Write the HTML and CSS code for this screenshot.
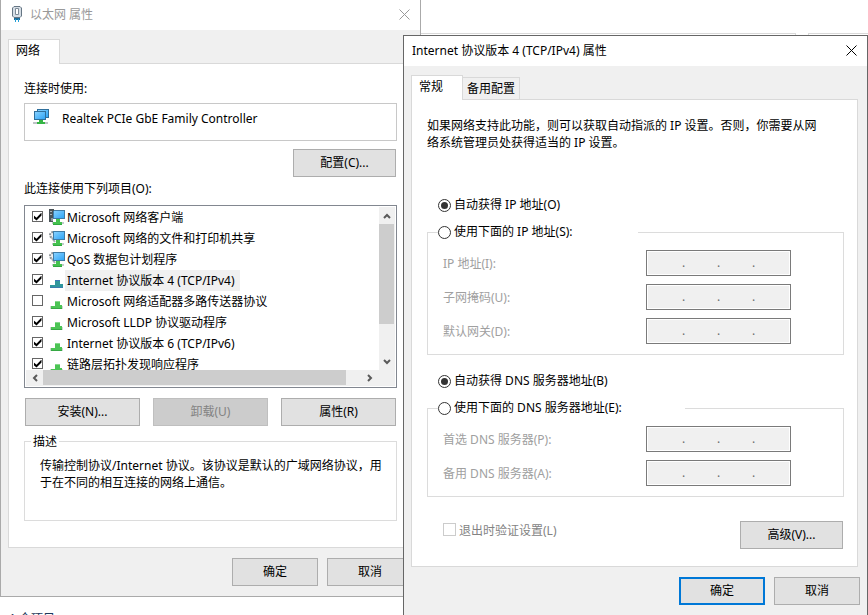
FILE: index.html
```
<!DOCTYPE html>
<html lang="zh-CN">
<head>
<meta charset="utf-8">
<title>以太网 属性</title>
<link rel="stylesheet" href="styles.css">
</head>
<body>
<svg class="defs" aria-hidden="true">
  <defs>
    <linearGradient id="screen" x1="0" y1="0" x2="1" y2="1">
      <stop offset="0" stop-color="#8bd3ff"/>
      <stop offset="1" stop-color="#2ba3f7"/>
    </linearGradient>
    <symbol id="monitor" viewBox="0 0 16 16">
      <path d="M3 13h12v2H3z" fill="#c3cacc"/>
      <path d="M7 10h4v3h2v3H4v-3h3z" fill="#45c14f"/>
      <path d="M4 15h9v1H4z" fill="#2fa83f"/>
      <rect x="4.500" y="1.500" width="11" height="8" fill="url(#screen)" stroke="#3f7ba5"/>
    </symbol>
    <symbol id="client" viewBox="0 0 16 16">
      <use href="#monitor"/>
      <path d="M0 0h5v2H4v11H0z" fill="#4a5358"/>
      <path d="M1 2.500h2M1 5.500h2" stroke="#aab3b8"/>
      <path d="M2 9h2v3H2z" fill="#8e989d"/>
    </symbol>
    <symbol id="service" viewBox="0 0 16 16">
      <circle cx="4" cy="5" r="3" fill="#eef0f1" stroke="#8d959a" stroke-width="2" stroke-dasharray="2 1"/>
      <path d="M3 8l3 4" stroke="#a8aeb2" stroke-width="2"/>
      <use href="#monitor"/>
    </symbol>
    <symbol id="protocol" viewBox="0 0 16 16">
      <path d="M1 13h13v3H1z" fill="#cfd8d2"/>
      <path d="M6 8h5v4h2v4H2v-3h4z" fill="#4cc455"/>
      <path d="M6 8h5v1H6z" fill="#86d98c"/>
      <path d="M2 15h11v1H2z" fill="#35a843"/>
    </symbol>
    <symbol id="protocol-selected" viewBox="0 0 16 16">
      <path d="M6 8h5v4h3v4H1v-3h5z" fill="#2f969c"/>
      <path d="M6 8h5v1H6z" fill="#3d77b8"/>
      <path d="M1 15h13v1H1z" fill="#3a7cae"/>
    </symbol>
    <symbol id="close" viewBox="0 0 11 11">
      <path d="M0.500 0.500l10 10M10.500 0.500l-10 10" fill="none" stroke="currentColor"/>
    </symbol>
    <symbol id="arrow" viewBox="0 0 8 6">
      <path d="M1 5l3-3 3 3" fill="none" stroke="#5a5a5a" stroke-width="2"/>
    </symbol>
  </defs>
</svg>

<main class="desktop">
  <div class="toolbar-edge"><span class="address"></span><span class="search"></span></div>
  <footer class="status"><span>1 个项目</span></footer>

  <section class="window adapter" aria-label="以太网 属性">
    <header class="titlebar">
      <svg class="app-icon" viewBox="0 0 10 17">
        <path d="M2 .5h6L9.500 2v8L8 11.500H2L.500 10V2z" fill="#d5dde5" stroke="#667684"/>
        <path d="M3.500 2.500h3v6h-3z" fill="#fff" stroke="#7d8a96"/>
        <path d="M2 12h6v2H2z" fill="#1d6b98"/>
        <path d="M3.500 13v3M6.500 13v3" stroke="#24a0d8"/>
      </svg>
      <h1>以太网 属性</h1>
      <button class="close" aria-label="关闭"><svg><use href="#close"/></svg></button>
    </header>
    <div class="body">
      <nav class="tabs"><button class="tab active">网络</button></nav>
      <div class="panel">
        <p>连接时使用:</p>
        <div class="device">
          <svg class="device-icon" viewBox="0 0 16 16">
            <path d="M0 13h15v2H0z" fill="#bfc4c7"/>
            <path d="M6 11h4v2h2v2H4v-2h2z" fill="#35b545"/>
            <rect x="4.500" y=".5" width="11" height="8" fill="url(#screen)" stroke="#2f6f9c"/>
            <rect x="1.500" y="2.500" width="11" height="8" fill="url(#screen)" stroke="#2f6f9c"/>
          </svg>
          <span>Realtek PCIe GbE Family Controller</span>
        </div>
        <div class="actions end"><button class="btn">配置(C)...</button></div>
        <p class="items-label">此连接使用下列项目(O):</p>
        <div class="list">
          <ul>
            <li><input type="checkbox" id="i1" checked><svg><use href="#client"/></svg><label for="i1">Microsoft 网络客户端</label></li>
            <li><input type="checkbox" id="i2" checked><svg><use href="#service"/></svg><label for="i2">Microsoft 网络的文件和打印机共享</label></li>
            <li><input type="checkbox" id="i3" checked><svg><use href="#service"/></svg><label for="i3">QoS 数据包计划程序</label></li>
            <li class="selected"><input type="checkbox" id="i4" checked><svg><use href="#protocol-selected"/></svg><label for="i4">Internet 协议版本 4 (TCP/IPv4)</label></li>
            <li><input type="checkbox" id="i5"><svg><use href="#protocol"/></svg><label for="i5">Microsoft 网络适配器多路传送器协议</label></li>
            <li><input type="checkbox" id="i6" checked><svg><use href="#protocol"/></svg><label for="i6">Microsoft LLDP 协议驱动程序</label></li>
            <li><input type="checkbox" id="i7" checked><svg><use href="#protocol"/></svg><label for="i7">Internet 协议版本 6 (TCP/IPv6)</label></li>
            <li><input type="checkbox" id="i8" checked><svg><use href="#protocol"/></svg><label for="i8">链路层拓扑发现响应程序</label></li>
          </ul>
          <div class="scroll vertical">
            <button aria-label="向上"><svg><use href="#arrow"/></svg></button>
            <span class="thumb"></span>
            <button class="down" aria-label="向下"><svg><use href="#arrow"/></svg></button>
          </div>
          <div class="scroll horizontal">
            <button class="left" aria-label="向左"><svg><use href="#arrow"/></svg></button>
            <span class="thumb"></span>
            <button class="right" aria-label="向右"><svg><use href="#arrow"/></svg></button>
          </div>
        </div>
        <div class="actions three">
          <button class="btn">安装(N)...</button>
          <button class="btn" disabled>卸载(U)</button>
          <button class="btn">属性(R)</button>
        </div>
        <fieldset class="description">
          <legend>描述</legend>
          <p>传输控制协议/Internet 协议。该协议是默认的广域网络协议，用于在不同的相互连接的网络上通信。</p>
        </fieldset>
      </div>
      <div class="dialog-actions"><button class="btn">确定</button><button class="btn">取消</button></div>
    </div>
  </section>

  <section class="window ipv4" aria-label="Internet 协议版本 4 (TCP/IPv4) 属性">
    <header class="titlebar">
      <h1>Internet 协议版本 4 (TCP/IPv4) 属性</h1>
      <button class="close" aria-label="关闭"><svg><use href="#close"/></svg></button>
    </header>
    <div class="body">
      <nav class="tabs"><button class="tab active">常规</button><button class="tab">备用配置</button></nav>
      <div class="panel">
        <p class="intro">如果网络支持此功能，则可以获取自动指派的 IP 设置。否则，你需要从网络系统管理员处获得适当的 IP 设置。</p>
        <div class="option"><input type="radio" name="ip" id="ip-auto" checked><label for="ip-auto">自动获得 IP 地址(O)</label></div>
        <fieldset class="group">
          <legend class="option"><input type="radio" name="ip" id="ip-manual"><label for="ip-manual">使用下面的 IP 地址(S):</label></legend>
          <div class="field"><label for="a1">IP 地址(I):</label><div class="ip"><input id="a1" disabled><span>.</span><input aria-label="2" disabled><span>.</span><input aria-label="3" disabled><span>.</span><input aria-label="4" disabled></div></div>
          <div class="field"><label for="b1">子网掩码(U):</label><div class="ip"><input id="b1" disabled><span>.</span><input aria-label="2" disabled><span>.</span><input aria-label="3" disabled><span>.</span><input aria-label="4" disabled></div></div>
          <div class="field"><label for="c1">默认网关(D):</label><div class="ip"><input id="c1" disabled><span>.</span><input aria-label="2" disabled><span>.</span><input aria-label="3" disabled><span>.</span><input aria-label="4" disabled></div></div>
        </fieldset>
        <div class="option dns-auto"><input type="radio" name="dns" id="dns-auto" checked><label for="dns-auto">自动获得 DNS 服务器地址(B)</label></div>
        <fieldset class="group dns">
          <legend class="option"><input type="radio" name="dns" id="dns-manual"><label for="dns-manual">使用下面的 DNS 服务器地址(E):</label></legend>
          <div class="field"><label for="d1">首选 DNS 服务器(P):</label><div class="ip"><input id="d1" disabled><span>.</span><input aria-label="2" disabled><span>.</span><input aria-label="3" disabled><span>.</span><input aria-label="4" disabled></div></div>
          <div class="field"><label for="e1">备用 DNS 服务器(A):</label><div class="ip"><input id="e1" disabled><span>.</span><input aria-label="2" disabled><span>.</span><input aria-label="3" disabled><span>.</span><input aria-label="4" disabled></div></div>
        </fieldset>
        <div class="advanced">
          <input type="checkbox" id="validate" disabled><label for="validate">退出时验证设置(L)</label>
          <button class="btn">高级(V)...</button>
        </div>
      </div>
      <div class="dialog-actions"><button class="btn primary">确定</button><button class="btn">取消</button></div>
    </div>
  </section>
</main>
</body>
</html>
```
FILE: styles.css
```
* { box-sizing: border-box; }
body, h1, p, ul, fieldset, legend { margin: 0; padding: 0; }
body, button, input {
  font: 12px/17px "Noto Sans", "Noto Sans CJK SC", sans-serif;
  color: #000;
}
body { background: #fff; }
button, input { margin: 0; padding: 0; }
svg { display: block; flex: none; }
.defs { position: absolute; width: 0; height: 0; }

.desktop { position: relative; height: 100vh; overflow: hidden; }
.toolbar-edge {
  display: flex;
  gap: 12px;
  padding: 33px 0 0 421px;
}
.toolbar-edge span { height: 4px; border-top: 1px solid #d9d9d9; }
.address { flex: 1; border-right: 1px solid #d9d9d9; }
.search { width: 60px; border-left: 1px solid #d9d9d9; }
.status {
  position: absolute;
  left: 9px;
  top: 610px;
  color: #1e395b;
}

.window { position: absolute; background: #f0f0f0; }
.adapter {
  left: 0;
  top: 0;
  width: calc(50% - 13px);
  border: 1px solid #aaa;
  border-top: 0;
}
.ipv4 {
  left: calc(50% - 31px);
  right: 0;
  top: 35px;
  bottom: 0;
  border: 1px solid #666;
  border-bottom: 0;
}

.titlebar {
  display: flex;
  align-items: center;
  height: 30px;
  padding: 0 10px 2px 8px;
  background: #fff;
}
.titlebar h1 { flex: 1; font-size: 12px; font-weight: 400; }
.adapter .titlebar { padding-left: 11px; color: #999; }
.app-icon { width: 10px; height: 17px; margin-right: 8px; }
.close { border: 0; background: none; color: #000; }
.close svg { width: 11px; height: 11px; }
.adapter .close { color: #999; }

.body { padding: 9px 7px 10px; }
.tabs { display: flex; align-items: flex-end; }
.tab {
  height: 22px;
  padding: 0 4px;
  border: 1px solid #d9d9d9;
  border-width: 1px 1px 0 0;
  background: #f0f0f0;
}
.tab.active {
  position: relative;
  width: 52px;
  height: 25px;
  margin-bottom: -1px;
  padding: 0 12px 3px 0;
  border-left-width: 1px;
  background: #fff;
}
.panel {
  padding: 16px 15px 26px;
  border: 1px solid #d9d9d9;
  background: #fff;
}

.btn {
  width: 103px;
  height: 28px;
  padding-bottom: 1px;
  border: 1px solid #adadad;
  background: #e1e1e1;
}
.btn:disabled { border-color: #bfbfbf; background: #ccc; color: #838383; }
.btn.primary { border: 2px solid #0078d7; }
.actions { display: flex; padding: 0 1px; }
.actions.end { justify-content: flex-end; margin-top: 8px; }
.actions.three { gap: 13px; margin-top: 10px; }
.three .btn { flex: 1; }
.dialog-actions {
  display: flex;
  justify-content: flex-end;
  gap: 9px;
  padding-top: 10px;
}
.dialog-actions .btn { width: 86px; }

.device {
  display: flex;
  gap: 13px;
  height: 38px;
  margin-top: 6px;
  padding: 5px 8px;
  border: 1px solid #c8c8c8;
}
.device-icon { width: 16px; height: 16px; }
.device span { padding-top: 1px; }
.items-label { margin-top: 3px; }

.list {
  display: grid;
  grid-template: 163px 16px / 1fr 16px;
  margin-top: 8px;
  padding: 1px;
  border: 1px solid #828790;
}
.list ul { overflow: hidden; list-style: none; }
.list li { display: flex; height: 21px; padding-left: 6px; }
.list li svg { width: 16px; height: 16px; margin: 2px 0 0 6px; }
.list label { padding: 2px 5px 2px 2px; white-space: nowrap; }
.selected label { background: #f0f0f0; }

input[type="checkbox"] {
  display: grid;
  place-items: center;
  flex: none;
  appearance: none;
  width: 11px;
  height: 11px;
  border: 1px solid #666;
  background: #fff;
}
.list input { margin-top: 4px; }
input[type="checkbox"]:checked::before {
  content: "";
  width: 8px;
  height: 8px;
  background: #000;
  clip-path: polygon(0 35%, 38% 65%, 100% 0, 100% 38%, 38% 100%, 0 70%);
}

.scroll { display: flex; background: #f0f0f0; }
.scroll button { display: grid; place-items: center; width: 17px; height: 17px; border: 0; background: none; }
.scroll svg { width: 8px; height: 6px; }
.thumb { background: #cdcdcd; }
.vertical { flex-direction: column; }
.vertical .thumb { width: 15px; height: 100px; }
.vertical button { width: 15px; }
.vertical .down { margin-top: auto; }
.horizontal { grid-column: 1 / 3; }
.horizontal button { height: 15px; }
.horizontal .thumb { width: 303px; height: 15px; }
.down svg { transform: rotate(180deg); }
.left svg { transform: rotate(-90deg); }
.right svg { transform: rotate(90deg); }
.horizontal .right { margin: 0 17px 0 auto; }

fieldset { min-width: 0; border: 1px solid #dcdcdc; }
.description { margin-top: 7px; padding: 7px 10px 29px 15px; }
.description legend { margin-left: -9px; padding: 0 2px; }

.ipv4 .panel { padding: 17px 13px 17px 15px; margin-right: 2px; }
.intro { padding-right: 20px; }
.option { display: flex; align-items: center; gap: 3px; height: 17px; }
.intro + .option { margin-top: 46px; }
.panel > .option { padding-left: 11px; }
.option label { padding-bottom: 3px; }
input[type="radio"] {
  display: grid;
  place-items: center;
  flex: none;
  appearance: none;
  width: 13px;
  height: 13px;
  border: 1px solid #333;
  border-radius: 50%;
  background: #fff;
}
input[type="radio"]:checked::before {
  content: "";
  width: 7px;
  height: 7px;
  border-radius: 50%;
  background: #333;
}
.group {
  display: grid;
  gap: 8px;
  margin-top: 10px;
  padding: 9px 52px 10px 15px;
}
.group legend { width: 200px; margin-left: -5px; }
.group.dns legend { width: 247px; }
.dns-auto { margin-top: 18px; }
.field { display: flex; align-items: center; justify-content: space-between; color: #a0a0a0; }
.ip {
  display: flex;
  align-items: center;
  width: 145px;
  height: 26px;
  padding-left: 3px;
  border: 1px solid #7a7a7a;
  outline: 1px solid #fff;
  outline-offset: -2px;
  background: #f0f0f0;
}
.ip input { width: 32px; height: 20px; border: 0; background: none; }
.ip span { width: 3px; padding-bottom: 2px; color: #6d6d6d; text-align: center; }

.advanced { display: flex; align-items: center; margin-top: 24px; padding: 0 1px 0 16px; color: #838383; }
.advanced input[type="checkbox"] { align-self: flex-start; width: 13px; height: 13px; margin: 2px 3px 0 0; border-color: #ccc; }
.advanced label { flex: 1; padding-bottom: 9px; }
```
